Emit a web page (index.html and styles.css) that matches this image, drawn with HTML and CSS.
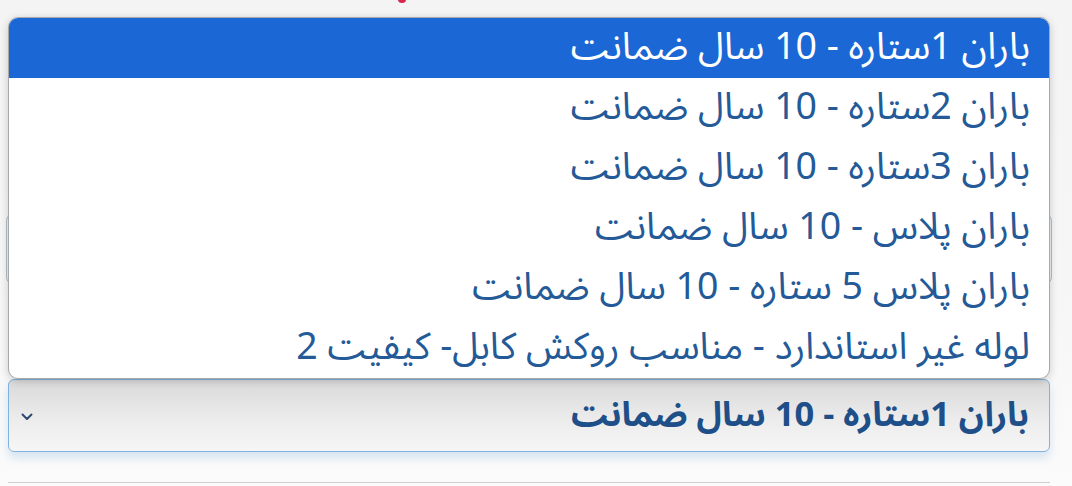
FILE: index.html
```html
<!DOCTYPE html>
<html lang="fa" dir="rtl">
<head>
<meta charset="utf-8">
<link rel="stylesheet" href="styles.css">
</head>
<body>
<div class="page">
  <span class="red-mark"></span>
  <div class="form">
    <div class="hline hline-1"></div>
    <div class="ghost-box"></div>
    <div class="hline hline-2"></div>
    <div class="select">
      <span class="select-text">باران 1ستاره - 10 سال ضمانت</span>
      <svg class="chev" width="12" height="8" viewBox="0 0 12 8"><path d="M1.5 1.5 L6 6 L10.5 1.5" fill="none" stroke="#2b4a70" stroke-width="2" stroke-linecap="round" stroke-linejoin="round"/></svg>
    </div>
    <div class="hline hline-3"></div>
  </div>
  <ul class="menu">
    <li class="opt selected">باران 1ستاره - 10 سال ضمانت</li>
    <li class="opt">باران 2ستاره - 10 سال ضمانت</li>
    <li class="opt">باران 3ستاره - 10 سال ضمانت</li>
    <li class="opt">باران پلاس - 10 سال ضمانت</li>
    <li class="opt">باران پلاس 5 ستاره - 10 سال ضمانت</li>
    <li class="opt">لوله غیر استاندارد - مناسب روکش کابل- کیفیت 2</li>
  </ul>
</div>
</body>
</html>
```
FILE: styles.css
```css
* { box-sizing: border-box; }
html, body { margin: 0; padding: 0; }
body {
  width: 1072px;
  height: 486px;
  overflow: hidden;
  background: linear-gradient(to bottom, #f4f4f4 0%, #f6f6f6 60%, #fbfbfb 100%);
  font-family: "Noto Sans Arabic", "Noto Sans", "DejaVu Sans", sans-serif;
}
.page {
  position: relative;
  width: 1072px;
  height: 486px;
}
.red-mark {
  position: absolute;
  top: -4px;
  left: 398px;
  width: 8px;
  height: 7px;
  border-radius: 50%;
  background: #d9254f;
}
.form {
  display: flex;
  flex-direction: column;
  padding: 0 22px 0 8px;
  direction: ltr;
}
.hline {
  height: 1px;
  background: #c9c9c9;
}
.hline-1 { margin-top: 150px; }
.ghost-box {
  margin-top: 62px;
  height: 72px;
  border: 1px solid #aebfcc;
  border-radius: 8px;
  margin-left: -2px;
  margin-right: -2px;
  background: #eef1f3;
}
.hline-2 { margin-top: 31px; }
.select {
  margin-top: 62px;
  height: 73px;
  border: 1px solid #7fb2dc;
  border-radius: 6px;
  background: linear-gradient(to bottom, #d9d9d9 0%, #ececec 55%, #f6f6f6 100%);
  box-shadow: 0 6px 10px rgba(120, 170, 215, 0.28);
  display: flex;
  align-items: center;
  justify-content: space-between;
  flex-direction: row-reverse;
  padding: 0 20px 0 12px;
}
.select-text {
  direction: rtl;
  font-size: 34.5px;
  font-weight: 700;
  color: #1e4f88;
  line-height: 60px;
  padding-bottom: 2px;
}
.chev { display: block; margin-top: 2px; }
.hline-3 { margin-top: 30px; background: #cfcfcf; }
.menu {
  position: absolute;
  top: 17px;
  left: 8px;
  width: 1042px;
  height: 362px;
  margin: 0;
  padding: 0;
  list-style: none;
  background: #fff;
  border: 1px solid #a9a9a9;
  border-radius: 10px;
  overflow: hidden;
  box-shadow: 0 2px 8px rgba(0, 0, 0, 0.18);
}
.opt {
  height: 60px;
  padding: 0 19px 2px 19px;
  font-size: 37.5px;
  line-height: 58px;
  color: #235a97;
  direction: rtl;
  white-space: nowrap;
}
.opt.selected {
  background: #1a67d5;
  color: #fff;
}
```
